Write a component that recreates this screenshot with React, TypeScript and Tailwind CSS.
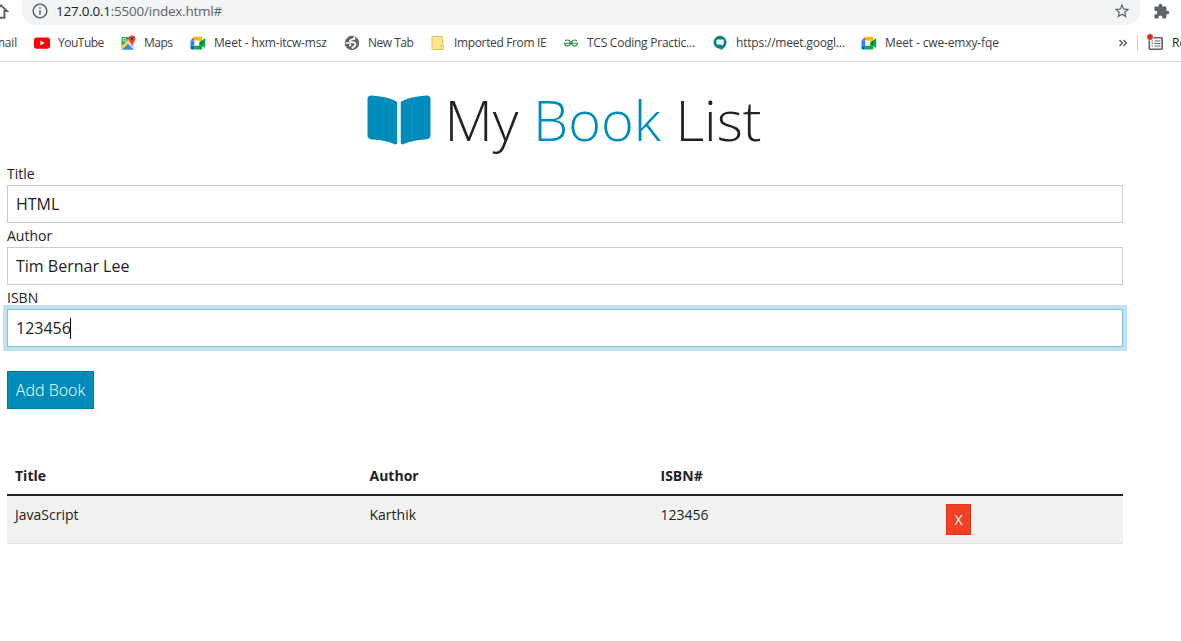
import type { ReactNode } from "react";
import { FaBookOpen } from "react-icons/fa";
import { MdExtension, MdInfoOutline, MdStarBorder } from "react-icons/md";
import { SiGeeksforgeeks } from "react-icons/si";

function YouTubeIcon() {
  return (
    <svg viewBox="0 0 16 16" className="size-4">
      <rect x="0" y="2.4" width="16" height="11.4" rx="2.8" fill="#f00" />
      <path d="M6.4 5.6v5l4.3-2.5z" fill="#fff" />
    </svg>
  );
}

function MapsIcon() {
  return (
    <svg viewBox="0 0 16 16" className="size-4">
      <path d="M2.500 2h11v12.500h-11a1 1 0 0 1-1-1V3a1 1 0 0 1 1-1z" fill="#1fa463" />
      <path d="M7.500 9 11 4.500l3 4v5l-1 1z" fill="#dadada" />
      <path d="M1.500 11 10.500 2.500l1.500 2L2.500 14.500l-1-1z" fill="#ffd04b" />
      <path d="M2.500 14.500 8 9l5.500 5.500z" fill="#4285f4" />
      <circle cx="4.500" cy="4.800" r="1.500" fill="none" stroke="#fff" strokeWidth=".9" />
      <path d="M12 .5a3.300 3.300 0 0 1 3.400 3.300c0 2.600-2.800 3.400-3.200 7.200h-.4c-.4-3.800-3.200-4.600-3.200-7.200A3.300 3.300 0 0 1 12 .5z" fill="#ea4335" />
      <circle cx="12" cy="3.800" r="1.200" fill="#8c1d18" />
    </svg>
  );
}

function MeetIcon() {
  return (
    <svg viewBox="0 0 16 16" className="size-4">
      <path d="M.5 5.500 4.300 1.800v3.700z" fill="#ea4335" />
      <path d="M4.300 1.800h6.900c.8 0 1.200.5 1.200 1.200v4.500L9.200 9V5.500H4.300z" fill="#ffba00" />
      <path d="M.5 5.500h3.800v5.200H.5z" fill="#2684fc" />
      <path d="M.5 10.700h3.800v3.700H1.700C.9 14.400.5 14 .5 13.200z" fill="#0066da" />
      <path d="M4.300 10.700h4.900V8l3.200 2.700v2.500c0 .8-.4 1.200-1.200 1.200H4.300z" fill="#00ac47" />
      <path d="m9.200 8.100 5-4.300c.5-.4 1-.2 1 .4v7.900c0 .6-.5.8-1 .4z" fill="#00ac47" />
      <path d="m9.200 8.100 3.200-2.900V11z" fill="#00832d" />
    </svg>
  );
}

function GlobeIcon() {
  return (
    <svg viewBox="0 0 16 16" className="size-4">
      <circle cx="8" cy="8" r="7.200" fill="#5f6368" />
      <path d="M9.500 2.300c1.500.2 1.200 1.700-.2 2C7.500 4.600 6 4.700 6 6c0 1.400 1.700 1.300 3.200 1.400 1.500.2 2.600 1 2.300 2.400-.4 1.600-2.500 2-3.600 3.700" fill="none" stroke="#fff" strokeWidth="1.900" />
      <path d="M1.800 8h2.500c1.400.1 2.200.8 2.400 1.600.1.800-.6 1.100-1.600 1.200" fill="none" stroke="#fff" strokeWidth="1.400" />
    </svg>
  );
}

function FolderIcon() {
  return (
    <svg viewBox="0 0 16 16" className="size-4">
      <path d="M2 1.500h10.500v13H2z" fill="#ffe692" stroke="#e8c351" />
      <path d="M11 10.500h2.500v4H11z" fill="#ffe692" stroke="#e8c351" strokeWidth=".9" />
    </svg>
  );
}

function HangoutsIcon() {
  return (
    <svg viewBox="0 0 16 16" className="size-4">
      <path d="M8 .8a6.500 6.500 0 0 1 6.500 6.400c0 3.600-2.600 6.200-6 8.100v-1.700A6.400 6.400 0 0 1 1.500 7.200 6.500 6.500 0 0 1 8 .8z" fill="#00897b" />
      <rect x="4.500" y="4.500" width="7.300" height="5" rx="1" fill="#fff" />
      <path d="M8.500 9h2v2z" fill="#fff" />
      <path d="M5.500 7h5.300" stroke="#c9dedb" />
    </svg>
  );
}

function ReadingListIcon() {
  return (
    <svg viewBox="0 0 18 18" className="size-[18px]">
      <rect x="3.300" y="3.800" width="12.900" height="11.400" rx=".8" fill="none" stroke="#5f6368" strokeWidth="1.600" />
      <path d="M5.500 7H7M5.500 9.500H7M5.500 12H7M8.500 7h6M8.500 9.500h6M8.500 12h6" stroke="#5f6368" strokeWidth="1.200" />
      <circle cx="4" cy="3" r="3.500" fill="#fff" />
      <circle cx="4" cy="3" r="2.900" fill="#d93025" />
    </svg>
  );
}

function Bookmark({ icon, label, width, spacing }: { icon: ReactNode; label: string; width: string; spacing: string }) {
  return (
    <div className={`flex shrink-0 items-center gap-2 ${width}`}>
      <span className="shrink-0">{icon}</span>
      <span className={`whitespace-nowrap ${spacing}`}>{label}</span>
    </div>
  );
}

function BrowserBar() {
  return (
    <header className="h-[62px] overflow-hidden border-b border-[#d9dbde] bg-white font-['Open_Sans',sans-serif] text-[#3c4043]">
      <div className="flex h-[25px]">
        <svg viewBox="0 0 22 25" className="h-[25px] w-[22px] shrink-0">
          <path d="M-4 10.500 1 5.300l6 5.700H4.400v6.700H0" fill="none" stroke="#5f6368" strokeWidth="1.900" />
        </svg>
        <div className="flex h-[25px] w-[1118px] shrink-0 items-start rounded-b-[14px] bg-[#f1f3f4] pl-[9px]">
          <MdInfoOutline className="mt-[2px] size-[18px] text-[#5f6368]" />
          <span className="ml-[7px] mt-[1px] text-[13.500px] leading-5 tracking-[-0.24px] text-[#5f6368]">
            <span className="text-[#202124]">127.0.0.1</span>:5500/index.html#
          </span>
          <MdStarBorder className="ml-auto mr-[9px] mt-[2px] size-[18px] text-[#5f6368]" />
        </div>
        <MdExtension className="ml-[13px] mt-[3px] size-[17px] shrink-0 text-[#5f6368]" />
      </div>
      <nav className="flex h-9 items-center text-[12px] leading-4">
        <div className="flex w-[34px] shrink-0 justify-end pr-[17px]">
          <span className="tracking-[-0.2px]">Gmail</span>
        </div>
        <Bookmark icon={<YouTubeIcon />} label="YouTube" width="w-[86px]" spacing="tracking-[-0.5px]" />
        <Bookmark icon={<MapsIcon />} label="Maps" width="w-[70px]" spacing="tracking-[-0.5px]" />
        <Bookmark icon={<MeetIcon />} label="Meet - hxm-itcw-msz" width="w-[154px]" spacing="tracking-[-0.17px]" />
        <Bookmark icon={<GlobeIcon />} label="New Tab" width="w-[86px]" spacing="tracking-[-0.5px]" />
        <Bookmark icon={<FolderIcon />} label="Imported From IE" width="w-[133px]" spacing="tracking-[-0.36px]" />
        <Bookmark icon={<SiGeeksforgeeks className="mx-px size-[14px] text-[#2f8d46]" />} label="TCS Coding Practic..." width="w-[149px]" spacing="tracking-[-0.25px]" />
        <Bookmark icon={<HangoutsIcon />} label="https://meet.googl..." width="w-[149px]" spacing="tracking-[-0.2px]" />
        <Bookmark icon={<MeetIcon />} label="Meet - cwe-emxy-fqe" width="w-[160px]" spacing="tracking-[-0.14px]" />
        <svg viewBox="0 0 10 10" className="ml-auto mr-[9px] size-[10px] shrink-0">
          <path d="m1.500 2 3 3-3 3M5.500 2l3 3-3 3" fill="none" stroke="#5f6368" strokeWidth="1.500" />
        </svg>
        <div className="h-4 w-px shrink-0 bg-[#cdd0d4]" />
        <div className="ml-2 flex w-[35px] shrink-0 items-center gap-2">
          <span className="shrink-0"><ReadingListIcon /></span>
          <span className="whitespace-nowrap text-[#202124]">Reading list</span>
        </div>
      </nav>
    </header>
  );
}

function Field({ label, value, focused = false }: { label: string; value: string; focused?: boolean }) {
  return (
    <div className="h-[62px]">
      <label className="block h-[21px] text-[14px] leading-[21px]">{label}</label>
      <div
        className={`mt-px flex h-[38px] items-center border bg-white px-2 text-[16px] leading-6 ${
          focused ? "border-[#7cc5dc] shadow-[0_0_0_4px_#bfe2ee]" : "border-[#ccc]"
        }`}
      >
        <span>{value}</span>
        {focused && <span className="-ml-px h-[21px] w-px bg-black" />}
      </div>
    </div>
  );
}

export default function App() {
  return (
    <div className="h-[641px] w-[1181px] overflow-hidden bg-white font-['Open_Sans',sans-serif] text-[#222]">
      <BrowserBar />
      <main className="ml-[7px] w-[1116px] pt-[25px]">
        <h1 className="flex h-[76px] items-start justify-center pr-[2px] text-[56px] font-light leading-[67px]">
          <FaBookOpen className="mr-[14px] mt-[5px] h-[56px] w-[64px] text-[#008cba]" />
          <span className="-mt-px whitespace-nowrap tracking-[-0.02px]">
            My <span className="text-[#008cba]">Book</span> List
          </span>
        </h1>
        <form>
          <Field label="Title" value="HTML" />
          <Field label="Author" value="Tim Bernar Lee" />
          <Field label="ISBN" value="123456" focused />
          <button type="button" className="mt-[22px] h-[38px] w-[87px] whitespace-nowrap border border-[#0079a1] bg-[#008cba] text-[16px] font-light leading-6 text-white">
            Add Book
          </button>
        </form>
        <table className="mt-[47px] w-full table-fixed border-collapse text-left text-[14px] leading-[21px]">
          <colgroup>
            <col className="w-[354.500px]" />
            <col className="w-[291px]" />
            <col className="w-[285.500px]" />
            <col />
          </colgroup>
          <thead>
            <tr className="h-[39px] border-b-2 border-[#222]">
              <th className="px-2 py-0 font-bold">Title</th>
              <th className="px-2 py-0 font-bold">Author</th>
              <th className="px-2 py-0 font-bold">ISBN#</th>
              <th />
            </tr>
          </thead>
          <tbody>
            <tr className="h-[48px] border-b border-[#dee2e6] bg-[#f1f1f1] align-top">
              <td className="px-2 pt-2">JavaScript</td>
              <td className="px-2 pt-2">Karthik</td>
              <td className="px-2 pt-2">123456</td>
              <td className="px-2 pt-2">
                <a href="#" className="flex h-[31px] w-[25px] items-center justify-center border border-[#e23716] bg-[#f04124] text-[14px] text-white">X</a>
              </td>
            </tr>
          </tbody>
        </table>
      </main>
    </div>
  );
}
